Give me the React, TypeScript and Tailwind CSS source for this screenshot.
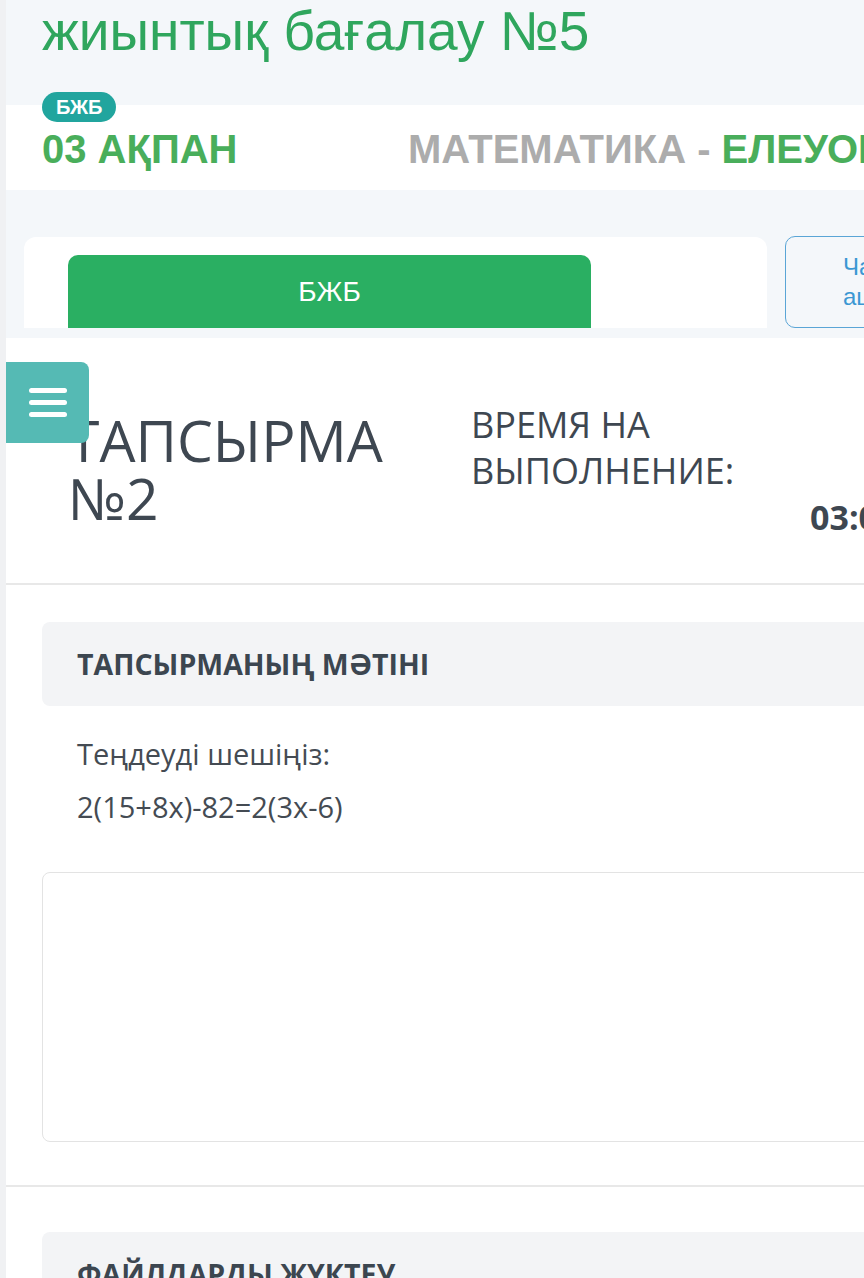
import React from 'react';

const sans = { fontFamily: '"Liberation Sans", Arial, sans-serif' };

const App: React.FC = () => {
  return (
    <div className="w-[864px] h-[1278px] overflow-hidden flex bg-[#f4f7fa]">
      <div className="w-[6px] shrink-0 bg-[#f0f1f3]" />
      <div className="w-[1200px] shrink-0 font-['Open_Sans',sans-serif]">
        {/* page title */}
        <h1 className="px-[36px] pt-[3px] h-[105px] text-[55px] leading-[56px] text-[#2fa65d] font-['Liberation_Sans',Arial,sans-serif] whitespace-nowrap">
          жиынтық бағалау №5
        </h1>

        {/* lesson header */}
        <div className="relative bg-white h-[85px] flex items-center px-[36px] whitespace-nowrap font-['Liberation_Sans',Arial,sans-serif] font-bold">
          <span className="absolute left-[36px] -top-[13px] h-[30px] px-[14px] rounded-full bg-[#21a59e] text-white text-[20px] leading-[30px]">
            БЖБ
          </span>
          <span className="text-[40px] text-[#49ae5b] mt-[2px] w-[366px]">03 АҚПАН</span>
          <span className="text-[40px] text-[#acacac] mt-[2px]">
            МАТЕМАТИКА - <span className="text-[#49ae5b]">ЕЛЕУОВА А.</span>
          </span>
        </div>

        {/* tabs */}
        <div className="flex items-end gap-[18px] pl-[18px] h-[138px]">
          <div className="w-[743px] h-[91px] bg-white rounded-t-xl pt-[18px] px-[44px]">
            <div className="w-[523px] h-[73px] rounded-t-[10px] bg-[#2aaf62] text-white text-[28px] flex items-center justify-center" style={sans}>
              БЖБ
            </div>
          </div>
          <div className="w-[220px] h-[92px] border border-[#5aa5d6] rounded-[10px] flex flex-col justify-center pl-[57px] text-[24px] leading-[30px] text-[#3b97d3]" style={sans}>
            <span>Чатты</span>
            <span>ашу</span>
          </div>
        </div>

        {/* task */}
        <div className="bg-white mt-[10px] h-[1000px]">
          <div className="relative h-[247px] border-b-2 border-[#e8e8e8] flex items-start text-[#3e4751] whitespace-nowrap">
            <button className="absolute left-0 top-[24px] w-[83px] h-[81px] rounded-r-lg bg-[#55bab4] flex flex-col items-center justify-center gap-[7px]">
              <span className="block w-[38px] h-[5px] rounded-full bg-white" />
              <span className="block w-[38px] h-[5px] rounded-full bg-white" />
              <span className="block w-[38px] h-[5px] rounded-full bg-white" />
            </button>
            <h2 className="pl-[62px] pt-[73px] w-[465px] text-[57px] leading-[58px] font-normal">
              ТАПСЫРМА
              <br />
              №2
            </h2>
            <div className="pt-[64px] w-[339px] text-[36px] leading-[46px]">
              ВРЕМЯ НА
              <br />
              ВЫПОЛНЕНИЕ:
            </div>
            <div className="pt-[156px] text-[34px] leading-[46px] font-bold">03:00:00</div>
          </div>

          <div className="px-[36px] pt-[37px]">
            <div className="h-[84px] rounded-l-lg bg-[#f3f4f6] flex items-center px-[35px]">
              <h3 className="text-[28.5px] font-bold text-[#3c4650]">ТАПСЫРМАНЫҢ МӘТІНІ</h3>
            </div>
            <div className="px-[35px] pt-[28px] text-[29px] text-[#444b53]">
              <p className="leading-[40px]">Теңдеуді шешіңіз:</p>
              <p className="leading-[40px] mt-[13px]">2(15+8x)-82=2(3x-6)</p>
            </div>
            <div className="mt-[45px] h-[270px] border border-[#e3e3e3] rounded-l-lg" />
          </div>

          <div className="mt-[43px] border-t-2 border-[#e8e8e8] px-[36px] pt-[45px]">
            <div className="h-[84px] rounded-l-lg bg-[#f3f4f6] flex items-center px-[35px]">
              <h3 className="text-[28.5px] font-bold text-[#3c4650]">ФАЙЛДАРДЫ ЖҮКТЕУ</h3>
            </div>
          </div>
        </div>
      </div>
    </div>
  );
};

export default App;
